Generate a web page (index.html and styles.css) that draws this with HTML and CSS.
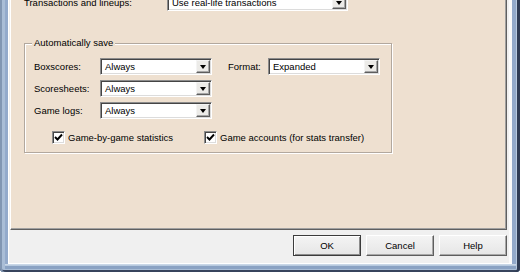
FILE: index.html
```html
<!DOCTYPE html>
<html>
<head>
<meta charset="utf-8">
<link rel="stylesheet" href="styles.css">
</head>
<body>
<div class="window">
  <div class="client">
    <div class="panel">
      <div class="toprow">
        <span class="toplabel">Transactions and lineups:</span>
        <div class="combo wide"><span class="val">Use real-life transactions</span><span class="arrow"></span></div>
      </div>
      <fieldset class="group">
        <legend>Automatically save</legend>
        <div class="grid">
          <span class="lbl">Boxscores:</span>
          <div class="combo"><span class="val">Always</span><span class="arrow"></span></div>
          <span class="lbl fmt">Format:</span>
          <div class="combo"><span class="val">Expanded</span><span class="arrow"></span></div>
          <span class="lbl">Scoresheets:</span>
          <div class="combo"><span class="val">Always</span><span class="arrow"></span></div>
          <span></span><span></span>
          <span class="lbl">Game logs:</span>
          <div class="combo"><span class="val">Always</span><span class="arrow"></span></div>
        </div>
        <div class="checks">
          <div class="check first"><span class="box"><svg width="9" height="9" viewBox="0 0 9 9"><polyline points="1,4 3.5,6.5 8,1.5" fill="none" stroke="#000" stroke-width="1.9"/></svg></span><span>Game-by-game statistics</span></div>
          <div class="check"><span class="box"><svg width="9" height="9" viewBox="0 0 9 9"><polyline points="1,4 3.5,6.5 8,1.5" fill="none" stroke="#000" stroke-width="1.9"/></svg></span><span>Game accounts (for stats transfer)</span></div>
        </div>
      </fieldset>
    </div>
    <div class="buttons">
      <div class="btn default">OK</div>
      <div class="btn">Cancel</div>
      <div class="btn">Help</div>
    </div>
  </div>
</div>
</body>
</html>
```
FILE: styles.css
```css
html, body {
  margin: 0;
  padding: 0;
  overflow: hidden;
  background: #fff;
}
body {
  font-family: "Liberation Sans", Arial, sans-serif;
  font-size: 9.5px;
  color: #000;
}
.window {
  width: 520px;
  height: 272px;
  box-sizing: border-box;
  padding: 0 8px 8px 8px;
  background: #93aacb;
  border-bottom-left-radius: 4px;
  border-bottom-right-radius: 4px;
  box-shadow:
    inset 2px 0 0 #8196b2,
    inset -3px 0 0 #2f3c55,
    inset 0 -2px 0 #37445d,
    inset 5px 0 0 #a9bdd6,
    inset -4px 0 0 #b9cbe0,
    inset 0 -3px 0 #a9bdd6,
    inset 0 -6px 0 #8aa2c3,
    inset 0 -7px 0 #b8cadf,
    inset 0 -8px 0 #c9d7e7;
}
.client {
  height: 264px;
  background: #f0f0f0;
  box-shadow: inset 1px 0 0 #fff, inset 0 -1px 0 #fff, inset -3px 0 0 #fbfbfb;
  display: flex;
  flex-direction: column;
}
.panel {
  box-sizing: border-box;
  margin-left: 2px;
  width: 497px;
  height: 230px;
  background: #eee0d0;
  border-left: 1px solid #fff;
  border-right: 1px solid #5f5f5f;
  border-bottom: 1px solid #5f5f5f;
  box-shadow: inset -1px 0 0 #a0a0a0, inset 0 -1px 0 #a0a0a0;
  display: flex;
  flex-direction: column;
  align-items: flex-start;
}
.toprow {
  display: flex;
  align-items: center;
  margin-top: -6px;
  padding-left: 13px;
}
.toplabel {
  width: 143px;
}
.combo {
  box-sizing: border-box;
  width: 112px;
  height: 17px;
  background: #fff;
  border: 1px solid;
  border-color: #8c8c8c #fff #fff #8c8c8c;
  box-shadow: inset 1px 1px 0 #454545, inset -1px -1px 0 #dcdcdc;
  display: flex;
  align-items: center;
  justify-content: space-between;
  padding: 1px;
}
.combo.wide {
  width: 181px;
}
.val {
  padding-left: 3px;
  white-space: nowrap;
}
.arrow {
  box-sizing: border-box;
  width: 14px;
  height: 13px;
  background: #ecebe8;
  border: 1px solid;
  border-color: #f4f4f4 #5e5e5e #5e5e5e #f4f4f4;
  box-shadow: inset -1px -1px 0 #a6a6a6;
  display: flex;
  align-items: center;
  justify-content: center;
}
.arrow::before {
  content: "";
  width: 0;
  height: 0;
  border-left: 3.5px solid transparent;
  border-right: 3.5px solid transparent;
  border-top: 4px solid #000;
  margin-top: 1px;
}
.group {
  box-sizing: border-box;
  margin: 26px 0 0 13px;
  width: 368px;
  padding: 0 9px 8px 9px;
  border: 1px solid #b2a89e;
  box-shadow: inset 1px 1px 0 #fff, 1px 1px 0 #fff;
  min-width: 0;
}
.group legend {
  padding: 0 2px;
  margin-left: -2px;
  line-height: 12px;
  background: #eee0d0;
}
.grid {
  margin-top: 9px;
  display: grid;
  grid-template-columns: 66px 112px 56px 112px;
  grid-auto-rows: 17px;
  row-gap: 5px;
  align-items: center;
}
.fmt {
  padding-left: 16px;
}
.checks {
  display: flex;
  margin-top: 12px;
  padding-left: 18px;
  height: 13px;
}
.check {
  display: flex;
  align-items: center;
  gap: 3px;
}
.check.first {
  width: 152px;
}
.box {
  box-sizing: border-box;
  width: 13px;
  height: 13px;
  background: #fff;
  border: 1px solid;
  border-color: #8c8c8c #fff #fff #8c8c8c;
  box-shadow: inset 1px 1px 0 #454545, inset -1px -1px 0 #dcdcdc;
  display: flex;
  align-items: center;
  justify-content: center;
}
.box svg {
  display: block;
}
.buttons {
  display: flex;
  justify-content: flex-end;
  gap: 5px;
  margin-top: 5px;
  padding-right: 5px;
}
.btn {
  box-sizing: border-box;
  width: 68px;
  height: 21px;
  background: linear-gradient(#f4f4f4, #e6e6e6);
  border: 1px solid;
  border-color: #fff #5e5e5e #5e5e5e #fff;
  box-shadow: inset -1px -1px 0 #a8a8a8;
  display: flex;
  align-items: center;
  justify-content: center;
}
.btn.default {
  border-color: #3c3c3c;
  box-shadow: inset 1px 1px 0 #fff, inset -1px -1px 0 #8c8c8c;
}
```
